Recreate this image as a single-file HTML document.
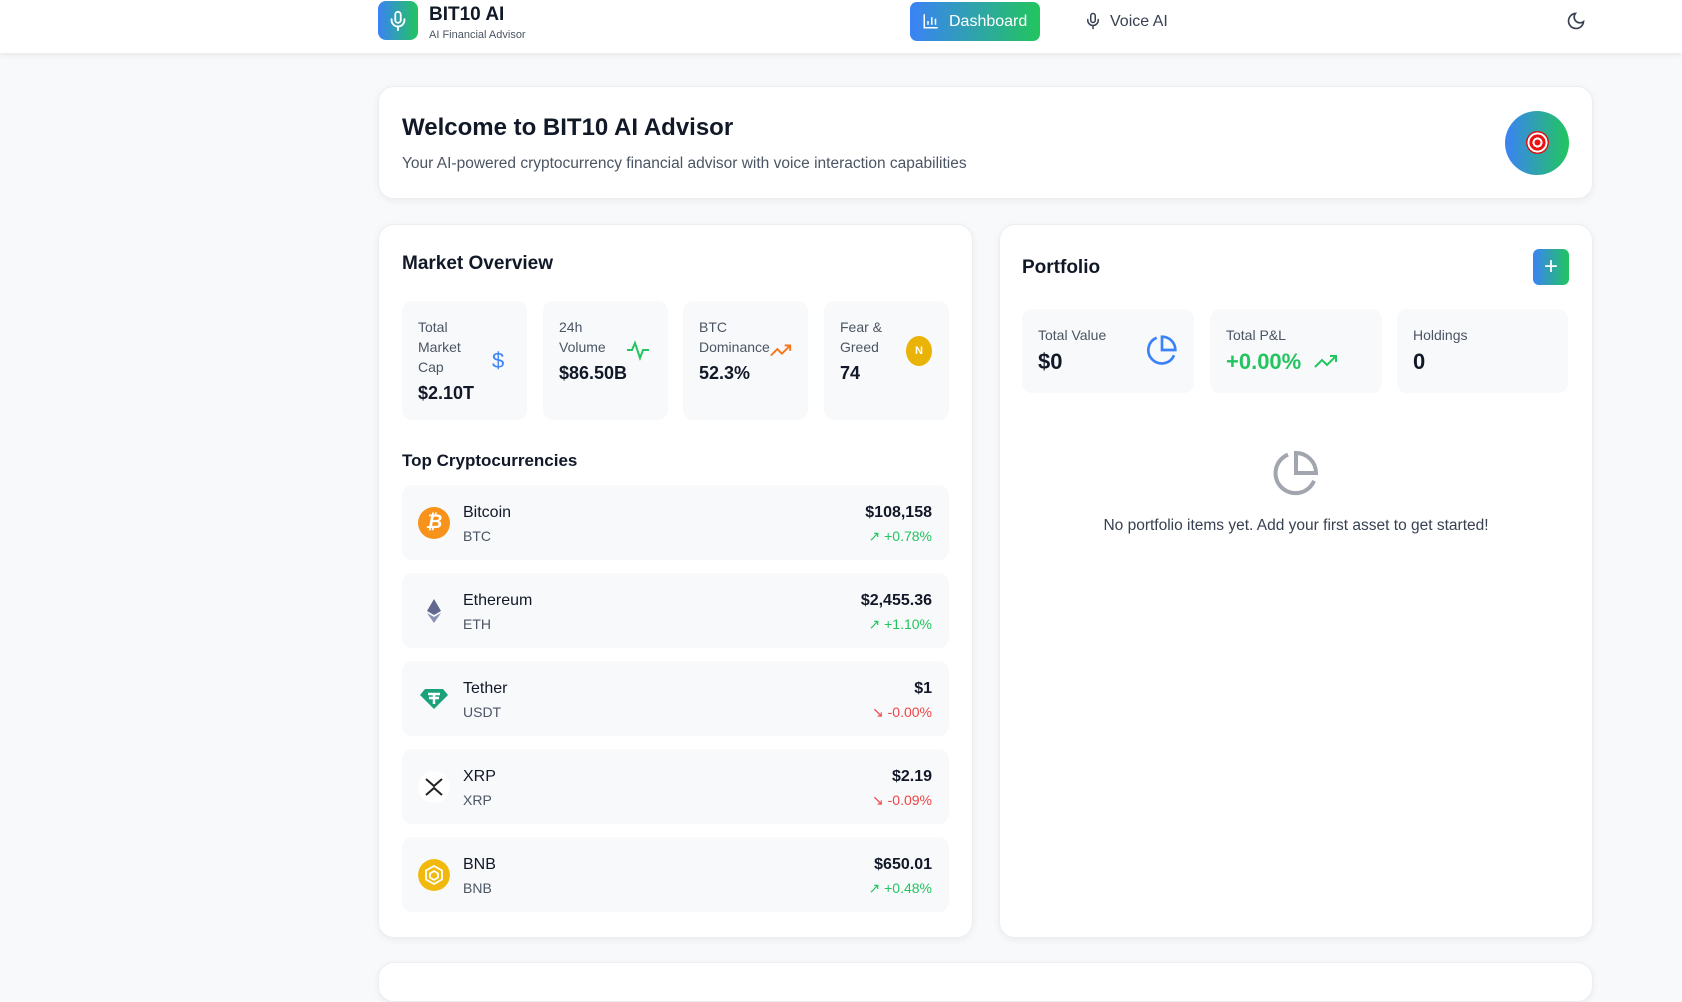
<!DOCTYPE html>
<html><head><meta charset="utf-8"><style>
*{box-sizing:border-box;margin:0;padding:0}
body{width:1682px;height:980px;overflow:hidden;background:#f8f9fb;font-family:"Liberation Sans",sans-serif;color:#111827;position:relative}
.a{position:absolute}
.hdr{left:0;top:0;width:1682px;height:53px;background:#fff;box-shadow:0 2px 6px rgba(0,0,0,.08)}
.grad{background:linear-gradient(90deg,#3b82f6,#22c55e)}
.card{background:#fff;border:1px solid #eceef2;border-radius:16px;box-shadow:0 2px 8px rgba(0,0,0,.06)}
.stat{background:#f8f9fb;border-radius:10px}
.lbl{font-size:14px;color:#4b5563;line-height:20px}
.val{font-size:18px;font-weight:bold;color:#111827}
.row{left:402px;width:547px;height:75px;background:#f8f9fb;border-radius:10px}
.row .nm{position:absolute;left:61px;top:19px;font-size:16px;color:#111827}
.row .sy{position:absolute;left:61px;top:43px;font-size:14px;color:#4b5563}
.row .pr{position:absolute;right:17px;top:19px;font-size:16px;font-weight:bold}
.row .ch{position:absolute;right:17px;top:43px;font-size:14px}
.row .ic{position:absolute;left:16px;top:22px;width:32px;height:32px;border-radius:50%}
.g{color:#22c55e}.r{color:#ef4444}
</style></head><body>
<div class="a hdr"></div>
<div class="a grad" style="left:378px;top:1px;width:40px;height:39px;border-radius:8px"></div>
<svg class="a" style="left:387px;top:9px" width="22" height="24" viewBox="0 0 24 24" fill="none" stroke="#fff" stroke-width="2" stroke-linecap="round"><rect x="9" y="2" width="6" height="12" rx="3"/><path d="M5 10v1a7 7 0 0 0 14 0v-1M12 18v4"/></svg>
<div class="a" style="left:429px;top:4px;font-size:19px;font-weight:bold">BIT10 AI</div>
<div class="a" style="left:429px;top:29px;font-size:11px;color:#4b5563">AI Financial Advisor</div>
<div class="a grad" style="left:910px;top:2px;width:130px;height:39px;border-radius:7px"></div>
<svg class="a" style="left:922px;top:12px" width="18" height="18" viewBox="0 0 24 24" fill="none" stroke="#fff" stroke-width="2"><path d="M3 3v18h18M8 17v-5M13 17V7M18 17v-8"/></svg>
<div class="a" style="left:949px;top:13px;font-size:16px;color:#fff">Dashboard</div>
<svg class="a" style="left:1084px;top:11px" width="18" height="20" viewBox="0 0 24 24" fill="none" stroke="#374151" stroke-width="2" stroke-linecap="round"><rect x="9" y="2" width="6" height="12" rx="3"/><path d="M5 10v1a7 7 0 0 0 14 0v-1M12 18v4"/></svg>
<div class="a" style="left:1110px;top:13px;font-size:16px;color:#374151">Voice AI</div>
<svg class="a" style="left:1566px;top:11px" width="20" height="20" viewBox="0 0 24 24" fill="none" stroke="#374151" stroke-width="2"><path d="M21 12.8A9 9 0 1 1 11.2 3a7 7 0 0 0 9.8 9.8z"/></svg>

<div class="a card" style="left:378px;top:86px;width:1215px;height:113px"></div>
<div class="a" style="left:402px;top:114px;font-size:24px;font-weight:bold">Welcome to BIT10 AI Advisor</div>
<div class="a" style="left:402px;top:155px;font-size:15.5px;color:#4b5563">Your AI-powered cryptocurrency financial advisor with voice interaction capabilities</div>
<div class="a grad" style="left:1505px;top:111px;width:64px;height:64px;border-radius:50%"></div>
<div class="a" style="left:1526px;top:131px;width:23px;height:23px;border-radius:50%;background:radial-gradient(circle,#e11 0 3px,#fff 3px 5px,#e11 5px 8px,#fff 8px 10px,#d11 10px)"></div>

<div class="a card" style="left:378px;top:224px;width:595px;height:714px"></div>
<div class="a" style="left:402px;top:253px;font-size:19px;font-weight:bold">Market Overview</div>
<div class="a stat" style="left:402px;top:301px;width:125px;height:119px"></div>
<div class="a lbl" style="left:418px;top:317px">Total<br>Market<br>Cap</div>
<div class="a val" style="left:418px;top:383px">$2.10T</div>
<div class="a" style="left:492px;top:348px;font-size:22px;color:#3b82f6">$</div>
<div class="a stat" style="left:543px;top:301px;width:125px;height:119px"></div>
<div class="a lbl" style="left:559px;top:317px">24h<br>Volume</div>
<div class="a val" style="left:559px;top:363px">$86.50B</div>
<svg class="a" style="left:626px;top:338px" width="24" height="24" viewBox="0 0 24 24" fill="none" stroke="#22c55e" stroke-width="2"><path d="M1 12h5l3-7 5 15 3-8h6"/></svg>
<div class="a stat" style="left:683px;top:301px;width:125px;height:119px"></div>
<div class="a lbl" style="left:699px;top:317px">BTC<br>Dominance</div>
<div class="a val" style="left:699px;top:363px">52.3%</div>
<svg class="a" style="left:770px;top:342px" width="22" height="16" viewBox="0 0 24 16" fill="none" stroke="#f97316" stroke-width="2"><path d="M1 14l7-7 5 5 9-9M16 3h6v6"/></svg>
<div class="a stat" style="left:824px;top:301px;width:125px;height:119px"></div>
<div class="a lbl" style="left:840px;top:317px">Fear &amp;<br>Greed</div>
<div class="a val" style="left:840px;top:363px">74</div>
<div class="a" style="left:906px;top:336px;width:26px;height:30px;border-radius:50%;background:#eab308;color:#fff;font-size:11px;font-weight:bold;text-align:center;line-height:30px">N</div>

<div class="a" style="left:402px;top:451px;font-size:17px;font-weight:bold">Top Cryptocurrencies</div>

<div class="a row" style="top:485px"><div class="ic" style="background:#f7931a;color:#fff;font-weight:bold;font-size:19px;text-align:center;line-height:32px;font-style:italic">₿</div><div class="nm">Bitcoin</div><div class="sy">BTC</div><div class="pr">$108,158</div><div class="ch g">↗ +0.78%</div></div>
<div class="a row" style="top:573px"><svg class="ic" viewBox="0 0 32 32"><path d="M16 4l-7 12 7 4 7-4z" fill="#62688f"/><path d="M9 18l7 10 7-10-7 4z" fill="#8a92b2"/></svg><div class="nm">Ethereum</div><div class="sy">ETH</div><div class="pr">$2,455.36</div><div class="ch g">↗ +1.10%</div></div>
<div class="a row" style="top:661px"><svg class="ic" viewBox="0 0 32 32"><path d="M2 12l5-6h18l5 6-14 14z" fill="#1ba27a"/><path d="M10 11h12M16 11v10M11 15h10" stroke="#fff" stroke-width="2.5"/></svg><div class="nm">Tether</div><div class="sy">USDT</div><div class="pr">$1</div><div class="ch r">↘ -0.00%</div></div>
<div class="a row" style="top:749px"><svg class="ic" viewBox="0 0 32 32"><circle cx="16" cy="16" r="16" fill="#fff"/><path d="M8 8l8 7 8-7M8 24l8-7 8 7" stroke="#222" stroke-width="2" fill="none"/></svg><div class="nm">XRP</div><div class="sy">XRP</div><div class="pr">$2.19</div><div class="ch r">↘ -0.09%</div></div>
<div class="a row" style="top:837px"><svg class="ic" viewBox="0 0 32 32"><circle cx="16" cy="16" r="16" fill="#f0b90b"/><path d="M16 7l8 4.5v9L16 25l-8-4.5v-9z M16 12l4 2.5v4L16 21l-4-2.5v-4z" stroke="#fff" stroke-width="1.8" fill="none"/></svg><div class="nm">BNB</div><div class="sy">BNB</div><div class="pr">$650.01</div><div class="ch g">↗ +0.48%</div></div>

<div class="a card" style="left:999px;top:224px;width:594px;height:714px"></div>
<div class="a" style="left:1022px;top:257px;font-size:19px;font-weight:bold">Portfolio</div>
<div class="a grad" style="left:1533px;top:249px;width:36px;height:36px;border-radius:6px;color:#fff;font-size:24px;text-align:center;line-height:35px">+</div>
<div class="a stat" style="left:1022px;top:309px;width:172px;height:84px"></div>
<div class="a lbl" style="left:1038px;top:325px">Total Value</div>
<div class="a" style="left:1038px;top:349px;font-size:22px;font-weight:bold">$0</div>
<svg class="a" style="left:1146px;top:334px" width="32" height="32" viewBox="0 0 24 24" fill="none" stroke="#3b82f6" stroke-width="2"><path d="M21 15.9A10 10 0 1 1 8 2.8"/><path d="M22 12A10 10 0 0 0 12 2v10z"/></svg>
<div class="a stat" style="left:1210px;top:309px;width:172px;height:84px"></div>
<div class="a lbl" style="left:1226px;top:325px">Total P&amp;L</div>
<div class="a g" style="left:1226px;top:349px;font-size:22px;font-weight:bold">+0.00%</div>
<svg class="a" style="left:1314px;top:353px" width="24" height="16" viewBox="0 0 24 16" fill="none" stroke="#22c55e" stroke-width="2"><path d="M1 14l7-7 5 5 9-9M16 3h6v6"/></svg>
<div class="a stat" style="left:1397px;top:309px;width:171px;height:84px"></div>
<div class="a lbl" style="left:1413px;top:325px">Holdings</div>
<div class="a" style="left:1413px;top:349px;font-size:22px;font-weight:bold">0</div>
<svg class="a" style="left:1272px;top:449px" width="48" height="48" viewBox="0 0 24 24" fill="none" stroke="#a1a5ad" stroke-width="2"><path d="M21 15.9A10 10 0 1 1 8 2.8"/><path d="M22 12A10 10 0 0 0 12 2v10z"/></svg>
<div class="a" style="left:1000px;top:517px;width:592px;text-align:center;font-size:15.5px;color:#374151">No portfolio items yet. Add your first asset to get started!</div>

<div class="a card" style="left:378px;top:962px;width:1215px;height:40px"></div>
</body></html>
